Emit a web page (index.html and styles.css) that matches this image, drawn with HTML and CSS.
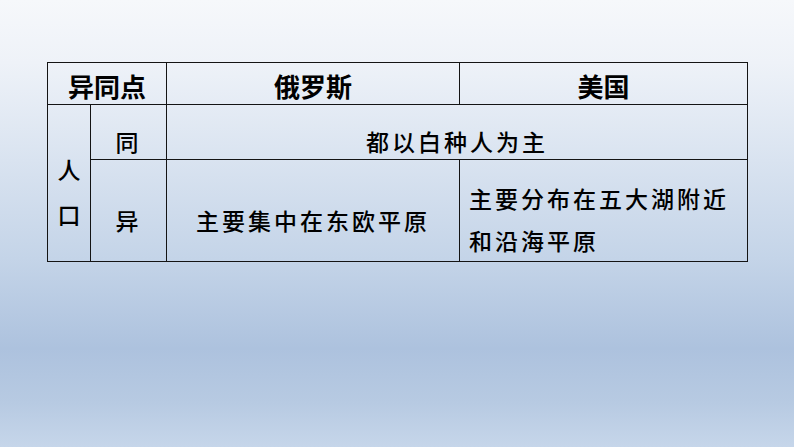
FILE: index.html
```html
<!DOCTYPE html>
<html lang="zh">
<head>
<meta charset="utf-8">
<link rel="stylesheet" href="styles.css">
</head>
<body>
<table class="cmp">
  <colgroup>
    <col class="c1"><col class="c2"><col class="c3"><col class="c4">
  </colgroup>
  <tr class="head">
    <th colspan="2">异同点</th>
    <th>俄罗斯</th>
    <th>美国</th>
  </tr>
  <tr class="r-same">
    <td rowspan="2" class="topic">人<br>口</td>
    <td class="kind">同</td>
    <td colspan="2" class="txt">都以白种人为主</td>
  </tr>
  <tr class="r-diff">
    <td class="kind">异</td>
    <td class="txt">主要集中在东欧平原</td>
    <td class="txt multi">主要分布在五大湖附近<br>和沿海平原</td>
  </tr>
</table>
</body>
</html>
```
FILE: styles.css
```css
html, body {
  margin: 0;
  padding: 0;
}
body {
  width: 794px;
  height: 447px;
  overflow: hidden;
  background: linear-gradient(to bottom, #f6f8fb 0%, #eef2f8 14%, #c4d4e8 58%, #adc2de 78%, #b7cae2 90%, #c6d6ea 100%);
  font-family: "Noto Sans CJK SC", "Noto Sans", sans-serif;
  color: #000;
}
.cmp {
  margin: 62px 0 0 47px;
  border-collapse: collapse;
  table-layout: fixed;
  width: 701px;
}
.c1 { width: 43px; }
.c2 { width: 76px; }
.c3 { width: 293px; }
.c4 { width: 288px; }
.cmp th, .cmp td {
  border: 1px solid #141414;
  padding: 0;
  text-align: center;
}
.head th {
  height: 42px;
  font-size: 26px;
  font-weight: 700;
  line-height: 30px;
  padding-top: 4px;
  box-sizing: border-box;
}
.r-same td { height: 55px; }
.r-diff td { height: 102px; }
.cmp td {
  font-size: 23px;
  font-weight: 500;
  letter-spacing: 3px;
  line-height: 30px;
  padding-top: 18px;
  box-sizing: border-box;
  vertical-align: middle;
}
.topic {
  line-height: 45px !important;
  letter-spacing: 0 !important;
}
.multi {
  text-align: left !important;
  padding-left: 9px !important;
  padding-top: 17px !important;
  line-height: 42px !important;
}
```
